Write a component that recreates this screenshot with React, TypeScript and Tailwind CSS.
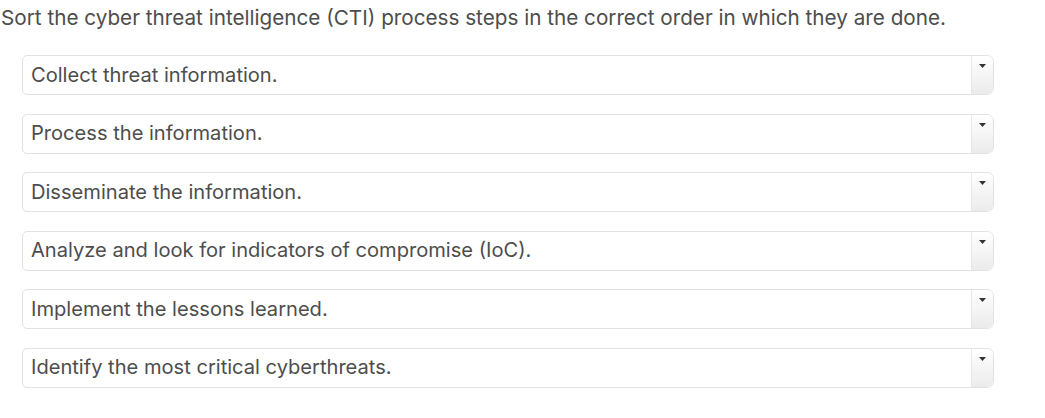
import React from "react";

const items = [
  "Collect threat information.",
  "Process the information.",
  "Disseminate the information.",
  "Analyze and look for indicators of compromise (IoC).",
  "Implement the lessons learned.",
  "Identify the most critical cyberthreats.",
];

export default function App() {
  return (
    <div className="w-[1045px] h-[418px] bg-white text-[#4d4d4d]" style={{ fontFamily: "Inter, 'Noto Sans', sans-serif" }}>
      <div className="pl-[1px] pt-[4px] text-[20.7px] leading-[28px]">
        Sort the cyber threat intelligence (CTI) process steps in the correct order in which they are done.
      </div>
      <div className="ml-[22px] mt-[23px] w-[972px] flex flex-col gap-[18.5px]">
        {items.map((t) => (
          <div key={t} className="h-[40px] flex rounded-l-[5px] rounded-r-[7px] border border-[#e2e2e2] bg-white overflow-hidden">
            <div className="flex-1 flex items-center pl-[8px] text-[20.1px]">{t}</div>
            <div className="w-[22px] border-l border-[#e8e8e8] bg-gradient-to-b from-white to-[#ebebeb] flex justify-center pt-[8px]">
              <svg width="7" height="4" viewBox="0 0 7 4"><path d="M0 0h7L3.5 4z" fill="#333" /></svg>
            </div>
          </div>
        ))}
      </div>
    </div>
  );
}
